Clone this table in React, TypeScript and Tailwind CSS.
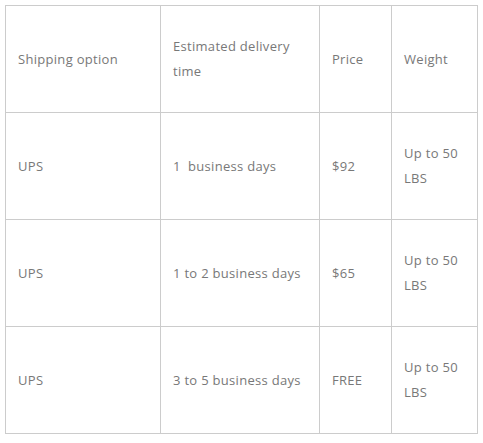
const rows = [
  { option: 'UPS', time: '1\u00a0 business days', price: '$92', weight: 'Up to 50 LBS' },
  { option: 'UPS', time: '1 to 2 business days', price: '$65', weight: 'Up to 50 LBS' },
  { option: 'UPS', time: '3 to 5 business days', price: 'FREE', weight: 'Up to 50 LBS' },
];

export default function App() {
  const cell = 'border border-[#cccccc] px-[12px] align-middle text-left font-normal';

  return (
    <div className="bg-white w-[483px] h-[443px] pt-[5px] pl-[5px] font-['Open_Sans',sans-serif] text-[13px] leading-[25px] tracking-[0.3px] text-[#787878]">
      <table className="border-collapse w-[472px] table-fixed">
        <colgroup>
          <col className="w-[155px]" />
          <col className="w-[159px]" />
          <col className="w-[72px]" />
          <col className="w-[86px]" />
        </colgroup>
        <thead>
          <tr className="h-[107px]">
            <th className={cell}>Shipping option</th>
            <th className={cell}>Estimated delivery time</th>
            <th className={cell}>Price</th>
            <th className={cell}>Weight</th>
          </tr>
        </thead>
        <tbody>
          {rows.map((r, i) => (
            <tr key={i} className="h-[107px]">
              <td className={cell}>{r.option}</td>
              <td className={cell}>{r.time}</td>
              <td className={cell}>{r.price}</td>
              <td className={cell}>{r.weight}</td>
            </tr>
          ))}
        </tbody>
      </table>
    </div>
  );
}
